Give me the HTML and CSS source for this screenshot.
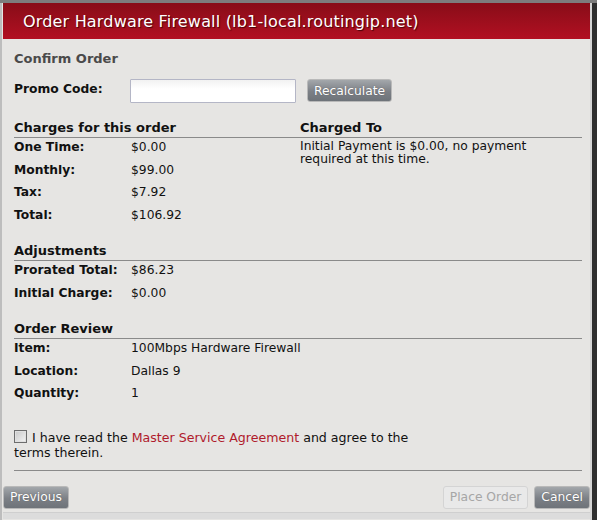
FILE: index.html
```html
<!DOCTYPE html>
<html>
<head>
<meta charset="utf-8">
<link rel="stylesheet" href="styles.css">
</head>
<body>
<div class="topstrip"></div>
<div class="screen">
  <div class="dialog">
    <div class="header">Order Hardware Firewall (lb1-local.routingip.net)</div>
    <div class="content">
      <div class="confirm">Confirm Order</div>
      <div class="promo">
        <span class="label">Promo Code:</span>
        <input class="promo-input" type="text">
        <button class="btn">Recalculate</button>
      </div>
      <div class="twocol">
        <div class="col-left">
          <div class="section-title">Charges for this order</div>
          <div class="rows">
            <span class="label">One Time:</span><span>$0.00</span>
            <span class="label">Monthly:</span><span>$99.00</span>
            <span class="label">Tax:</span><span>$7.92</span>
            <span class="label">Total:</span><span>$106.92</span>
          </div>
        </div>
        <div class="col-right">
          <div class="section-title">Charged To</div>
          <div class="charged-text">Initial Payment is $0.00, no payment required at this time.</div>
        </div>
      </div>
      <div class="section">
        <div class="section-title">Adjustments</div>
        <div class="rows">
          <span class="label">Prorated Total:</span><span>$86.23</span>
          <span class="label">Initial Charge:</span><span>$0.00</span>
        </div>
      </div>
      <div class="section">
        <div class="section-title">Order Review</div>
        <div class="rows">
          <span class="label">Item:</span><span>100Mbps Hardware Firewall</span>
          <span class="label">Location:</span><span>Dallas 9</span>
          <span class="label">Quantity:</span><span>1</span>
        </div>
      </div>
      <div class="agree">
        <span class="checkbox"></span>I have read the <a class="link" href="#">Master Service Agreement</a> and agree to the terms therein.
      </div>
      <div class="hr"></div>
    </div>
    <div class="footer">
      <button class="btn">Previous</button>
      <div class="footer-right">
        <button class="btn btn-disabled">Place Order</button>
        <button class="btn">Cancel</button>
      </div>
    </div>
    <div class="bottomline"></div>
  </div>
  <div class="sidebar"></div>
</div>
</body>
</html>
```

FILE: styles.css
```css
html, body {
  margin: 0;
  padding: 0;
}
body {
  background: #2e2e2e;
  font-family: "DejaVu Sans", Verdana, sans-serif;
  font-size: 12.3px;
  color: #111;
  width: 597px;
  height: 520px;
  overflow: hidden;
}
.topstrip {
  height: 3px;
  background: #7d7d7d;
}
.screen {
  display: flex;
}
.dialog {
  width: 587px;
  height: 517px;
  background: #e6e5e3;
  border-left: 2px solid #bdbdbd;
  border-right: 2px solid #d4d4d4;
  padding-left: 1px;
  display: flex;
  flex-direction: column;
  box-sizing: content-box;
}
.sidebar {
  flex: 1;
  background: #2e2e2e;
}
.header {
  height: 36px;
  background: linear-gradient(#880d18, #b21022);
  color: #fff;
  font-size: 16px;
  line-height: 37px;
  padding-left: 20px;
  text-shadow: 1px 1px 1px #4a0008;
  letter-spacing: 0.18px;
}
.content {
  padding: 0 8px 0 11px;
}
.confirm {
  margin-top: 12px;
  font-size: 13px;
  font-weight: bold;
  color: #4a4a4a;
  height: 17px;
}
.promo {
  display: flex;
  align-items: flex-start;
  margin-top: 11px;
  height: 24px;
}
.promo .label {
  width: 116px;
  line-height: 20px;
}
.label {
  font-weight: bold;
}
.promo-input {
  width: 164px;
  height: 22px;
  margin: 0;
  padding: 0;
  border: 1px solid #b4b6c6;
  background: linear-gradient(#f2f2f2, #ffffff 40%);
  border-radius: 1px;
}
.btn {
  font-family: "DejaVu Sans", Verdana, sans-serif;
  font-size: 12.3px;
  color: #fff;
  background: linear-gradient(#a3a7ab, #7c8086 55%, #6e7379);
  border: 1px solid #b9b9b9;
  border-radius: 3px;
  height: 23px;
  padding: 0 6px;
  margin: 0;
  text-shadow: 0 0 1px #555;
}
.promo .btn {
  margin-left: 11px;
}
.twocol {
  display: flex;
  margin-top: 17px;
}
.col-left {
  width: 286px;
}
.col-right {
  flex: 1;
}
.section-title {
  font-size: 13px;
  font-weight: bold;
  border-bottom: 1px solid #8a8a8a;
  line-height: 16px;
  height: 16px;
  padding-bottom: 1px;
}
.rows {
  display: grid;
  grid-template-columns: 117px 1fr;
  grid-auto-rows: 22.5px;
  line-height: 18px;
}
.charged-text {
  line-height: 13px;
  margin-top: 2px;
  padding-right: 20px;
}
.section {
  margin-top: 15px;
}
.agree {
  margin-top: 23px;
  line-height: 15px;
  width: 410px;
  font-size: 12.6px;
}
.checkbox {
  display: inline-block;
  width: 11px;
  height: 11px;
  border: 1px solid #6d6d6d;
  background: linear-gradient(135deg, #c8c8c8, #f4f4f4);
  vertical-align: -1px;
  margin-right: 5px;
  box-shadow: inset 0 0 0 1px #e0e0e0;
}
.link {
  color: #b01a2c;
  text-decoration: none;
}
.hr {
  margin-top: 10px;
  border-top: 1px solid #8a8a8a;
}
.footer {
  display: flex;
  justify-content: space-between;
  margin-top: 15px;
}
.footer-right {
  display: flex;
  gap: 6px;
}
.btn-disabled {
  background: #e9e9e9;
  color: #a6a6a6;
  border-color: #d4d4d4;
  text-shadow: none;
}
.bottomline {
  margin-top: 3px;
  border-top: 1px solid #cfcfcf;
  height: 6px;
  background: #dcdcdc;
}
```
